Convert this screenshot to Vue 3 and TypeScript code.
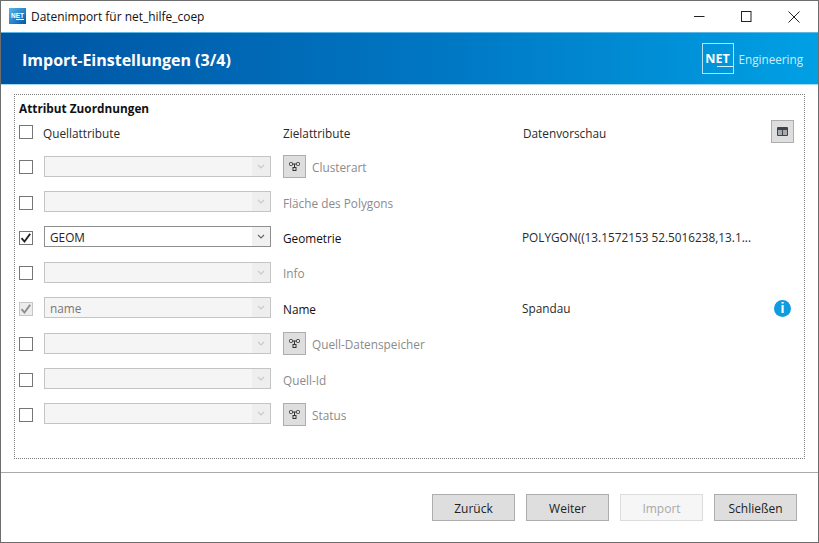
<script setup lang="ts">
interface Row {
  id: string
  checked: boolean
  disabled: boolean
  source: string
  target: string
  active: boolean
  cluster: boolean
  preview: string
  info: boolean
}
const rows: Row[] = [
  { id: 'a', checked: false, disabled: false, source: '', target: 'Clusterart', active: false, cluster: true, preview: '', info: false },
  { id: 'b', checked: false, disabled: false, source: '', target: 'Fläche des Polygons', active: false, cluster: false, preview: '', info: false },
  { id: 'c', checked: true, disabled: false, source: 'GEOM', target: 'Geometrie', active: true, cluster: false, preview: 'POLYGON((13.1572153 52.5016238,13.1...', info: false },
  { id: 'd', checked: false, disabled: false, source: '', target: 'Info', active: false, cluster: false, preview: '', info: false },
  { id: 'e', checked: true, disabled: true, source: 'name', target: 'Name', active: true, cluster: false, preview: 'Spandau', info: true },
  { id: 'f', checked: false, disabled: false, source: '', target: 'Quell-Datenspeicher', active: false, cluster: true, preview: '', info: false },
  { id: 'g', checked: false, disabled: false, source: '', target: 'Quell-Id', active: false, cluster: false, preview: '', info: false },
  { id: 'h', checked: false, disabled: false, source: '', target: 'Status', active: false, cluster: true, preview: '', info: false },
]
</script>

<template>
  <div class="window">
    <header class="titlebar">
      <div class="appicon"><span>NET</span><i class="appline"></i></div>
      <span class="title">Datenimport für net_hilfe_coep</span>
      <div class="controls">
        <svg width="12" height="12" viewBox="0 0 12 12"><path d="M1 5.5H11.5" stroke="#222" fill="none" /></svg>
        <svg class="maxicon" width="12" height="12" viewBox="0 0 12 12"><rect x="1.5" y="0.5" width="9.5" height="10" stroke="#222" fill="none" /></svg>
        <svg width="12" height="12" viewBox="0 0 12 12"><path d="M0.5 0.5L11.5 11.5M11.5 0.5L0.5 11.5" stroke="#222" fill="none" /></svg>
      </div>
    </header>

    <section class="banner">
      <h1>Import-Einstellungen (3/4)</h1>
      <div class="brand">
        <div class="brandbox"><span>NET</span><i class="brandline"></i></div>
        <span class="brandname">Engineering</span>
      </div>
    </section>

    <main class="content">
      <div class="group">
        <div class="grouptitle">Attribut Zuordnungen</div>
        <div class="headrow">
          <span class="check"></span>
          <span class="col-src">Quellattribute</span>
          <span class="col-target">Zielattribute</span>
          <span class="col-preview">Datenvorschau</span>
          <button class="iconbtn tablebtn" type="button">
            <svg width="11" height="9" viewBox="0 0 11 9">
              <rect x="0" y="0" width="11" height="9" rx="1" fill="#3f444b" />
              <rect x="1" y="3" width="4" height="5" fill="#a9abae" />
              <rect x="6" y="3" width="4" height="5" fill="#a9abae" />
            </svg>
          </button>
        </div>
        <div class="rows">
          <div v-for="row in rows" :key="row.id" class="row">
            <span class="check" :class="{ on: row.checked && !row.disabled, off: row.disabled }">
              <svg v-if="row.checked" width="14" height="14" viewBox="0 0 14 14">
                <path d="M2.5 7.2L5.5 10.6L11.2 2.8" fill="none" stroke="currentColor" stroke-width="1.9" />
              </svg>
            </span>
            <div class="select" :class="{ enabled: row.checked && !row.disabled }">
              <span class="value">{{ row.source }}</span>
              <span class="arrow">
                <svg width="8" height="5" viewBox="0 0 8 5"><path d="M1 1L4 4L7 1" fill="none" stroke="currentColor" stroke-width="1.1" /></svg>
              </span>
            </div>
            <div class="target" :class="{ active: row.active }">
              <button v-if="row.cluster" class="iconbtn" type="button">
                <svg width="11" height="9" viewBox="0 0 11 9" fill="none" stroke="#333" stroke-width="1">
                  <rect x="0.5" y="0.5" width="3" height="3" rx="1" />
                  <rect x="7.5" y="0.5" width="3" height="3" rx="1" />
                  <rect x="4" y="5.5" width="3" height="3" />
                  <path d="M3.5 2H7.5M5.5 2V5.5" />
                </svg>
              </button>
              <span>{{ row.target }}</span>
            </div>
            <span class="preview">{{ row.preview }}</span>
            <span v-if="row.info" class="info">i</span>
          </div>
        </div>
      </div>
    </main>

    <footer class="footer">
      <button class="btn" type="button">Zurück</button>
      <button class="btn" type="button">Weiter</button>
      <button class="btn disabled" type="button">Import</button>
      <button class="btn" type="button">Schließen</button>
    </footer>
  </div>
</template>

<style>
html, body { margin: 0; background: #fff; }
</style>

<style scoped>
.window {
  box-sizing: border-box;
  width: 819px;
  height: 543px;
  border: 1px solid #6d6d6d;
  background: #fff;
  display: flex;
  flex-direction: column;
  font-family: "Open Sans", "Noto Sans", sans-serif;
  font-size: 11.8px;
  color: #2a2a2a;
  overflow: hidden;
}
.titlebar {
  height: 31px;
  flex: none;
  display: flex;
  align-items: center;
  padding-left: 8px;
  box-sizing: border-box;
}
.appicon {
  width: 17px;
  height: 16px;
  margin-top: -1px;
  background: linear-gradient(135deg, #58b6ea, #0058a8);
  display: flex;
  flex-direction: column;
  align-items: center;
  justify-content: center;
  color: #fff;
  font-family: "Liberation Sans", sans-serif;
  font-weight: 700;
  font-size: 6.5px;
  line-height: 7px;
}
.appline {
  display: block;
  align-self: flex-end;
  width: 8px;
  height: 1px;
  margin-right: 2px;
  background: #fff;
}
.title {
  margin-left: 5px;
  color: #111;
  font-size: 11.95px;
}
.controls {
  margin-left: auto;
  display: flex;
  gap: 35px;
  padding-right: 18px;
  align-items: center;
}
.maxicon { margin-right: 1px; }
.banner {
  height: 53px;
  flex: none;
  box-sizing: border-box;
  border-top: 1px solid #5db7e6;
  border-bottom: 1px solid #a5d8f3;
  background: linear-gradient(90deg, #0054a2 0%, #0078c4 55%, #00a0e4 100%);
  display: flex;
  align-items: center;
  justify-content: space-between;
  padding: 0 15px 0 21px;
  color: #fff;
}
.banner h1 {
  margin: 0;
  padding-top: 3px;
  font-size: 16px;
  font-weight: 700;
}
.brand {
  display: flex;
  align-items: center;
  gap: 5px;
}
.brandbox {
  box-sizing: border-box;
  width: 32px;
  height: 31px;
  border: 1px solid #b5e0f6;
  display: flex;
  flex-direction: column;
  align-items: center;
  justify-content: center;
  font-weight: 700;
  font-size: 12.5px;
  line-height: 15px;
}
.brandline {
  display: block;
  align-self: flex-end;
  width: 16px;
  height: 1px;
  background: #d9f0fb;
}
.brandname {
  font-size: 11.7px;
  color: #cdebfa;
}
.content {
  flex: 1;
  min-height: 0;
  padding: 9px 13px 13px 13px;
  display: flex;
  box-sizing: border-box;
}
.group {
  flex: 1;
  box-sizing: border-box;
  border: 1px dotted #808080;
  padding: 5px 10px 0 4px;
  display: flex;
  flex-direction: column;
}
.grouptitle {
  font-weight: 700;
  color: #111;
  font-size: 11.8px;
  line-height: 17px;
}
.headrow, .row {
  display: grid;
  grid-template-columns: 14px 238px 252px 1fr 23px;
  align-items: center;
}
.headrow {
  height: 23px;
  margin-top: 3px;
}
.col-src, .col-target, .col-preview { padding-top: 2px; }
.col-src { padding-left: 10px; }
.col-target { padding-left: 12px; }
.rows {
  display: flex;
  flex-direction: column;
  margin-top: 6px;
}
.row { height: 35.4px; }
.check {
  box-sizing: border-box;
  width: 14px;
  height: 14px;
  margin-top: 1px;
  border: 1px solid #767676;
  background: #fff;
  display: flex;
  color: #222;
}
.headrow .check { margin-top: 0; }
.check svg { margin: -1px; }
.check.off {
  border-color: #c6c6c6;
  background: #ececec;
  color: #8c8c8c;
}
.select {
  box-sizing: border-box;
  margin: 0 0 1px 11px;
  height: 21px;
  border: 1px solid #c4c4c4;
  background: #f5f5f5;
  display: flex;
  align-items: center;
  color: #777;
}
.select.enabled {
  border-color: #8f8f8f;
  background: #fff;
  color: #222;
}
.value {
  flex: 1;
  padding-left: 5px;
}
.arrow {
  width: 18px;
  height: 100%;
  display: flex;
  align-items: center;
  justify-content: center;
  background: #eee;
  color: #c9c9c9;
}
.select.enabled .arrow {
  background: #f1f1f1;
  color: #666;
}
.target {
  display: flex;
  align-items: center;
  gap: 6px;
  padding: 1px 0 0 12px;
  color: #8b8b8b;
}
.target.active { color: #111; }
.target .iconbtn { margin-bottom: 1px; }
.iconbtn {
  box-sizing: border-box;
  width: 23px;
  height: 23px;
  padding: 0;
  border: 1px solid #adadad;
  background: #dedede;
  display: flex;
  align-items: center;
  justify-content: center;
}
.tablebtn { justify-self: end; }
.preview {
  white-space: nowrap;
  margin-left: -1px;
}
.info {
  justify-self: center;
  width: 17px;
  height: 17px;
  margin-top: 1px;
  border-radius: 50%;
  background: #0f9be0;
  color: #fff;
  font-family: "Liberation Sans", sans-serif;
  font-weight: 700;
  font-size: 14px;
  line-height: 17px;
  text-align: center;
}
.footer {
  flex: none;
  height: 70px;
  box-sizing: border-box;
  border-top: 1px solid #a9a9a9;
  display: flex;
  justify-content: flex-end;
  gap: 11px;
  padding: 21px 21px 0 0;
}
.btn {
  box-sizing: border-box;
  width: 83px;
  height: 27px;
  border: 1px solid #adadad;
  background: #dedede;
  color: #222;
  font-family: inherit;
  font-size: 12px;
  padding: 1px 0 0;
}
.btn.disabled {
  background: #f6f6f6;
  border-color: #dcdcdc;
  color: #a9a9a9;
}
</style>
